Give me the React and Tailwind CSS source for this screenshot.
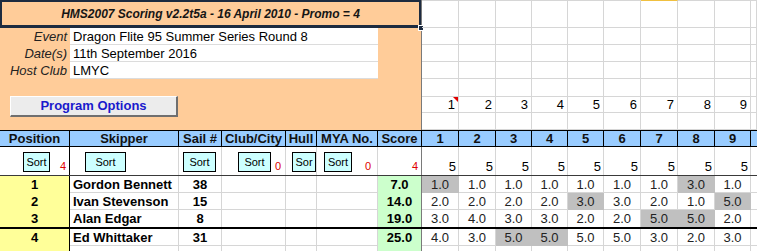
const COLS =
  'grid grid-cols-[70px_109px_43px_64px_31px_61px_44px_37px_37px_36px_36px_36px_37px_37px_37px_36px_6px]';
const TOP_COLS =
  'grid grid-cols-[37px_37px_36px_36px_36px_37px_37px_37px_36px_6px] grid-rows-[28px_17px_17px_17px_18px_16px_17px]';

const rows = [
  { pos: 1, name: 'Gordon Bennett', sail: 38, score: '7.0', r: ['1.0', '1.0', '1.0', '1.0', '1.0', '1.0', '1.0', '3.0', '1.0'], disc: [0, 7] },
  { pos: 2, name: 'Ivan Stevenson', sail: 15, score: '14.0', r: ['2.0', '2.0', '2.0', '2.0', '3.0', '3.0', '2.0', '1.0', '5.0'], disc: [4, 8] },
  { pos: 3, name: 'Alan Edgar', sail: 8, score: '19.0', r: ['3.0', '4.0', '3.0', '3.0', '2.0', '2.0', '5.0', '5.0', '2.0'], disc: [6, 7] },
  { pos: 4, name: 'Ed Whittaker', sail: 31, score: '25.0', r: ['4.0', '3.0', '5.0', '5.0', '5.0', '5.0', '3.0', '2.0', '3.0'], disc: [2, 3] },
];

const heads = ['Position', 'Skipper', 'Sail #', 'Club/City', 'Hull', 'MYA No.', 'Score'];
const raceNums = [1, 2, 3, 4, 5, 6, 7, 8, 9];

function SortBtn({ w, label = 'Sort' }) {
  return (
    <div className={`${w} h-[20px] bg-[#CCFFFF] border border-black flex items-center justify-center text-[11px] leading-none overflow-hidden`}>
      {label}
    </div>
  );
}

function InfoRow({ label, value }) {
  return (
    <div className="flex h-[17px]">
      <div className="w-[70px] pr-[3px] text-right italic text-[13px] leading-[17px] text-[#222]">{label}</div>
      <div className="w-[308px] bg-white border-b border-[#dcdcdc] pl-[3px] text-[13px] leading-[17px]">{value}</div>
    </div>
  );
}

export default function App() {
  return (
    <div className="w-[757px] h-[251px] overflow-hidden bg-white text-black font-['Liberation_Sans',Arial,sans-serif]">
      {/* top block */}
      <div className="flex h-[130px]">
        <div className="relative w-[422px] shrink-0 bg-[#FFCC99] border-r border-[#7a7a7a]">
          <div className="h-[28px] border-2 border-b-[3px] border-[#1d2b40] flex items-center justify-center text-[12px] font-bold italic text-[#151515]">
            HMS2007 Scoring v2.2t5a - 16 April 2010 - Promo = 4
          </div>
          <div className="absolute left-[418px] top-[25px] w-[6px] h-[6px] bg-[#1d2b40] border border-white"></div>
          <InfoRow label="Event" value="Dragon Flite 95 Summer Series Round 8" />
          <InfoRow label="Date(s)" value="11th September 2016" />
          <InfoRow label="Host Club" value="LMYC" />
          <div className="ml-[10px] mt-[17px] w-[168px] h-[21px] bg-[#ECECEC] border-t border-l border-t-white border-l-white border-r-2 border-b-2 border-r-[#6f6f6f] border-b-[#6f6f6f] flex items-center justify-center text-[13px] font-bold text-[#1a1acc]">
            Program Options
          </div>
        </div>
        <div className={`${TOP_COLS} w-[335px]`}>
          {Array.from({ length: 70 }).map((_, i) => {
            const row = Math.floor(i / 10);
            const col = i % 10;
            const top = row === 0 ? (col === 6 ? 'border-t border-t-[#f0c040]' : 'border-t') : '';
            return (
              <div
                key={i}
                className={`relative border-r border-b border-[#d6d6d6] ${top} flex items-end justify-end pr-[3px] text-[13px] leading-[15px]`}
              >
                {row === 5 && col < 9 ? raceNums[col] : ''}
                {row === 5 && col === 0 && (
                  <svg className="absolute right-0 top-0" width="5" height="5" viewBox="0 0 5 5">
                    <polygon points="0,0 5,0 5,5" fill="#e00000" />
                  </svg>
                )}
              </div>
            );
          })}
        </div>
      </div>

      {/* header row */}
      <div className={`${COLS} h-[17px] bg-[#99CCFF] border-t border-b border-black text-[13px] font-bold leading-none`}>
        {heads.map((h) => (
          <div key={h} className="border-r border-black flex items-center justify-center text-[#111]">{h}</div>
        ))}
        {raceNums.map((n) => (
          <div key={n} className="border-r border-black flex items-center justify-center text-[#111]">{n}</div>
        ))}
        <div></div>
      </div>

      {/* sort row */}
      <div className={`${COLS} h-[29px] border-b border-[#3a3a3a] text-[11px] leading-none`}>
        <div className="flex border-r border-black">
          <div className="pl-[23px] pt-[5px]"><SortBtn w="w-[27px]" /></div>
          <div className="ml-auto self-end pr-[3px] pb-[3px] text-[#e00000]">4</div>
        </div>
        <div className="flex border-r border-[#d6d6d6] pl-[15px] pt-[5px]"><SortBtn w="w-[41px]" /></div>
        <div className="flex border-r border-[#d6d6d6] pl-[4px] pt-[5px]"><SortBtn w="w-[33px]" /></div>
        <div className="flex border-r border-[#d6d6d6]">
          <div className="pl-[16px] pt-[5px]"><SortBtn w="w-[33px]" /></div>
          <div className="ml-auto self-end pr-[4px] pb-[3px] text-[#e00000]">0</div>
        </div>
        <div className="flex border-r border-[#d6d6d6] pl-[6px] pt-[5px]"><SortBtn w="w-[25px]" label="Sor" /></div>
        <div className="flex border-r border-[#d6d6d6]">
          <div className="pl-[7px] pt-[5px]"><SortBtn w="w-[28px]" /></div>
          <div className="ml-auto self-end pr-[6px] pb-[3px] text-[#e00000]">0</div>
        </div>
        <div className="flex justify-end items-end border-r border-[#7a7a7a] pr-[3px] pb-[3px] text-[#e00000]">4</div>
        {raceNums.map((n) => (
          <div key={n} className="flex justify-end items-end border-r border-[#d6d6d6] pr-[2px] pb-[2px] text-[13px]">5</div>
        ))}
        <div></div>
      </div>

      {/* data rows */}
      {rows.map((d, ri) => {
        const thick = ri === 2;
        const rowH = thick ? 'h-[19px] border-b-2 border-black' : 'h-[17px]';
        const line = thick ? '' : 'border-b border-[#d6d6d6]';
        return (
          <div key={d.pos} className={`${COLS} ${rowH} text-[13px] leading-none`}>
            <div className="bg-[#FFFF99] border-r border-black flex items-center justify-center font-bold">{d.pos}</div>
            <div className={`border-r border-[#d6d6d6] ${line} flex items-center pl-[3px] font-bold whitespace-nowrap`}>{d.name}</div>
            <div className={`border-r border-[#d6d6d6] ${line} flex items-center justify-center font-bold`}>{d.sail}</div>
            <div className={`border-r border-[#d6d6d6] ${line}`}></div>
            <div className={`border-r border-[#d6d6d6] ${line}`}></div>
            <div className={`border-r border-[#d6d6d6] ${line}`}></div>
            <div className="bg-[#CCFFCC] border-r border-[#7a7a7a] flex items-center justify-center font-bold">{d.score}</div>
            {d.r.map((v, i) =>
              d.disc.includes(i) ? (
                <div key={i} className="bg-[#C0C0C0] border-r border-[#C0C0C0] flex items-center justify-center text-[#222]">{v}</div>
              ) : (
                <div key={i} className={`border-r border-[#d6d6d6] ${line} flex items-center justify-center text-[#222]`}>{v}</div>
              )
            )}
            <div className={`${line}`}></div>
          </div>
        );
      })}

      {/* partial next row */}
      <div className={`${COLS} h-[6px]`}>
        <div className="bg-[#FFFF99] border-r border-black"></div>
        <div className="border-r border-[#d6d6d6]"></div>
        <div className="border-r border-[#d6d6d6]"></div>
        <div className="border-r border-[#d6d6d6]"></div>
        <div className="border-r border-[#d6d6d6]"></div>
        <div className="border-r border-[#d6d6d6]"></div>
        <div className="bg-[#CCFFCC] border-r border-[#7a7a7a]"></div>
        {raceNums.map((n) => (
          <div key={n} className="border-r border-[#d6d6d6]"></div>
        ))}
        <div></div>
      </div>
    </div>
  );
}
